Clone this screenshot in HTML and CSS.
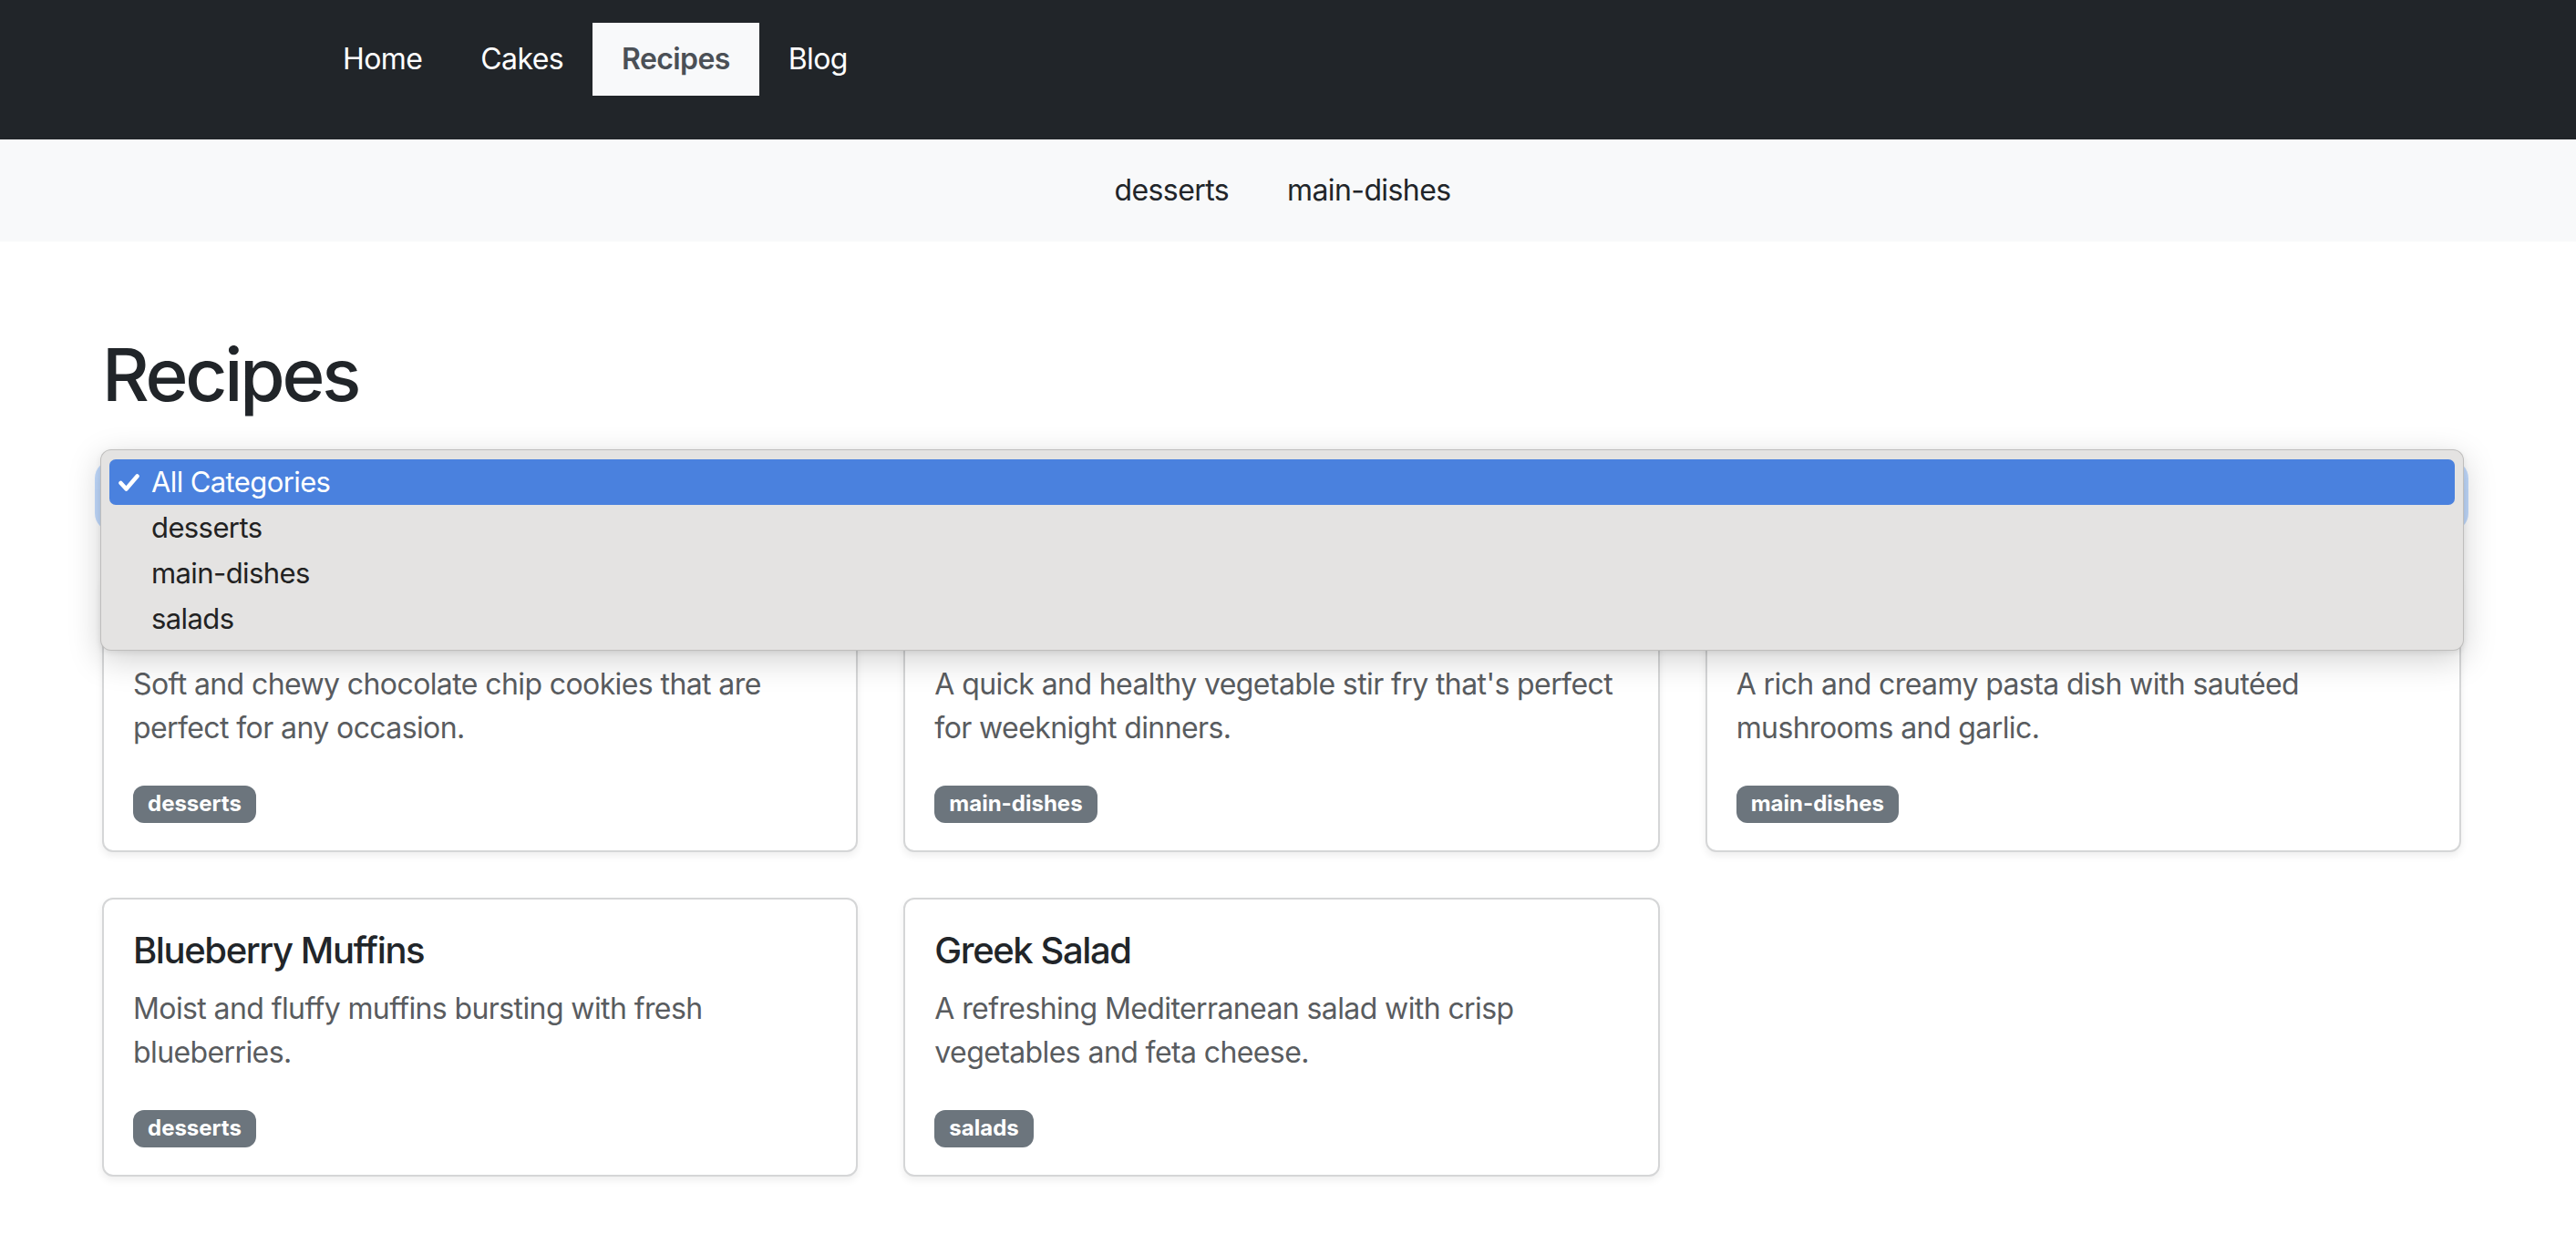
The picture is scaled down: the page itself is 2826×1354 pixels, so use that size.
FILE: index.html
```html
<!DOCTYPE html>
<html lang="en">
<head>
<meta charset="utf-8">
<title>Recipes</title>
<link rel="stylesheet" href="styles.css">
</head>
<body>
<nav class="topnav">
  <ul class="topnav-list">
    <li><a class="topnav-link" href="#">Home</a></li>
    <li><a class="topnav-link" href="#">Cakes</a></li>
    <li><a class="topnav-link active" href="#">Recipes</a></li>
    <li><a class="topnav-link" href="#">Blog</a></li>
  </ul>
</nav>
<nav class="subnav">
  <a class="subnav-link" href="#">desserts</a>
  <a class="subnav-link" href="#">main-dishes</a>
</nav>
<main class="page">
  <h1 class="page-title">Recipes</h1>
  <div class="select-wrap">
    <div class="select-box"></div>
    <div class="popup">
      <div class="popup-row selected"><span class="check"><svg width="23" height="19" viewBox="0 0 23 19"><polyline points="2.5,10 8.5,16.5 20.5,2.5" fill="none" stroke="#fff" stroke-width="4.5" stroke-linecap="round" stroke-linejoin="round"/></svg></span><span>All Categories</span></div>
      <div class="popup-row"><span class="check"></span><span>desserts</span></div>
      <div class="popup-row"><span class="check"></span><span>main-dishes</span></div>
      <div class="popup-row"><span class="check"></span><span>salads</span></div>
    </div>
  </div>
  <div class="cards">
    <div class="card">
      <h5 class="card-title">Chocolate Chip Cookies</h5>
      <p class="card-text">Soft and chewy chocolate chip cookies that are perfect for any occasion.</p>
      <div class="card-tags"><span class="badge">desserts</span></div>
    </div>
    <div class="card">
      <h5 class="card-title">Vegetable Stir Fry</h5>
      <p class="card-text">A quick and healthy vegetable stir fry that's perfect for weeknight dinners.</p>
      <div class="card-tags"><span class="badge">main-dishes</span></div>
    </div>
    <div class="card">
      <h5 class="card-title">Mushroom Pasta</h5>
      <p class="card-text">A rich and creamy pasta dish with sautéed mushrooms and garlic.</p>
      <div class="card-tags"><span class="badge">main-dishes</span></div>
    </div>
    <div class="card">
      <h5 class="card-title">Blueberry Muffins</h5>
      <p class="card-text">Moist and fluffy muffins bursting with fresh blueberries.</p>
      <div class="card-tags"><span class="badge">desserts</span></div>
    </div>
    <div class="card">
      <h5 class="card-title">Greek Salad</h5>
      <p class="card-text">A refreshing Mediterranean salad with crisp vegetables and feta cheese.</p>
      <div class="card-tags"><span class="badge">salads</span></div>
    </div>
  </div>
</main>
</body>
</html>
```
FILE: styles.css
```css
* { box-sizing: border-box; }
html, body { margin: 0; padding: 0; background: #fff; }
body {
  font-family: Inter, "Noto Sans", "DejaVu Sans", sans-serif;
  font-size: 32px;
  line-height: 48px;
  color: #212529;
  letter-spacing: -0.6px;
}
a { text-decoration: none; }

.topnav {
  background: #212529;
  height: 153px;
  padding: 25px 0 0 344px;
}
.topnav-list {
  list-style: none;
  margin: 0;
  padding: 0;
  display: flex;
}
.topnav-link {
  display: block;
  padding: 16px 32px;
  line-height: 48px;
  color: #fff;
  font-size: 32px;
}
.topnav-link.active {
  background: #f8f9fa;
  color: #4b5056;
  font-weight: 600;
}

.subnav {
  background: #f8f9fa;
  height: 112px;
  display: flex;
  justify-content: center;
  align-items: center;
  padding-right: 12px;
}
.subnav-link {
  color: #212529;
  padding: 0 32px;
  font-size: 32px;
  line-height: 48px;
}

.page {
  margin-left: 112px;
  width: 2588px;
  padding-top: 98px;
  padding-bottom: 60px;
}
.page-title {
  margin: 0 0 54px 0;
  font-size: 80px;
  line-height: 96px;
  font-weight: 500;
  letter-spacing: -3.2px;
}

.select-wrap {
  position: relative;
  margin-bottom: 54px;
}
.select-box {
  height: 62px;
  border: 2px solid #86b7fe;
  border-radius: 12px;
  background: #fff;
  box-shadow: 0 0 0 8px rgba(13, 110, 253, 0.25);
}
.popup {
  position: absolute;
  top: -20px;
  left: -2px;
  right: -3px;
  height: 221px;
  background: #e4e3e2;
  border: 1px solid rgba(0, 0, 0, 0.16);
  border-radius: 12px;
  padding: 10px 9px;
  box-shadow: 0 10px 36px rgba(0, 0, 0, 0.18), 0 2px 6px rgba(0, 0, 0, 0.08);
  z-index: 5;
}
.popup-row {
  display: flex;
  align-items: center;
  height: 50px;
  line-height: 50px;
  font-size: 31px;
  color: #222;
  border-radius: 7px;
}
.popup-row.selected {
  background: #4a81de;
  color: #fff;
}
.check {
  width: 46px;
  padding-left: 10px;
  display: flex;
  align-items: center;
}

.cards {
  display: grid;
  grid-template-columns: repeat(3, 1fr);
  column-gap: 50px;
  row-gap: 50px;
}
.card {
  border: 2px solid #d5d6d7;
  border-radius: 12px;
  padding: 32px 32px 30px;
  background: #fff;
  box-shadow: 0 4px 8px rgba(0, 0, 0, 0.07);
}
.card-title {
  margin: 0 0 16px 0;
  font-size: 40px;
  line-height: 48px;
  font-weight: 500;
  color: #212529;
  letter-spacing: -1.4px;
}
.card-text {
  margin: 0 0 32px 0;
  color: #595c5f;
  font-size: 32px;
  line-height: 48px;
}
.card-tags {
  line-height: 48px;
}
.badge {
  display: inline-block;
  background: #6c757d;
  color: #fff;
  font-size: 24px;
  font-weight: 700;
  line-height: 1;
  letter-spacing: 0;
  padding: 8px 16px 9px;
  border-radius: 12px;
}
```
